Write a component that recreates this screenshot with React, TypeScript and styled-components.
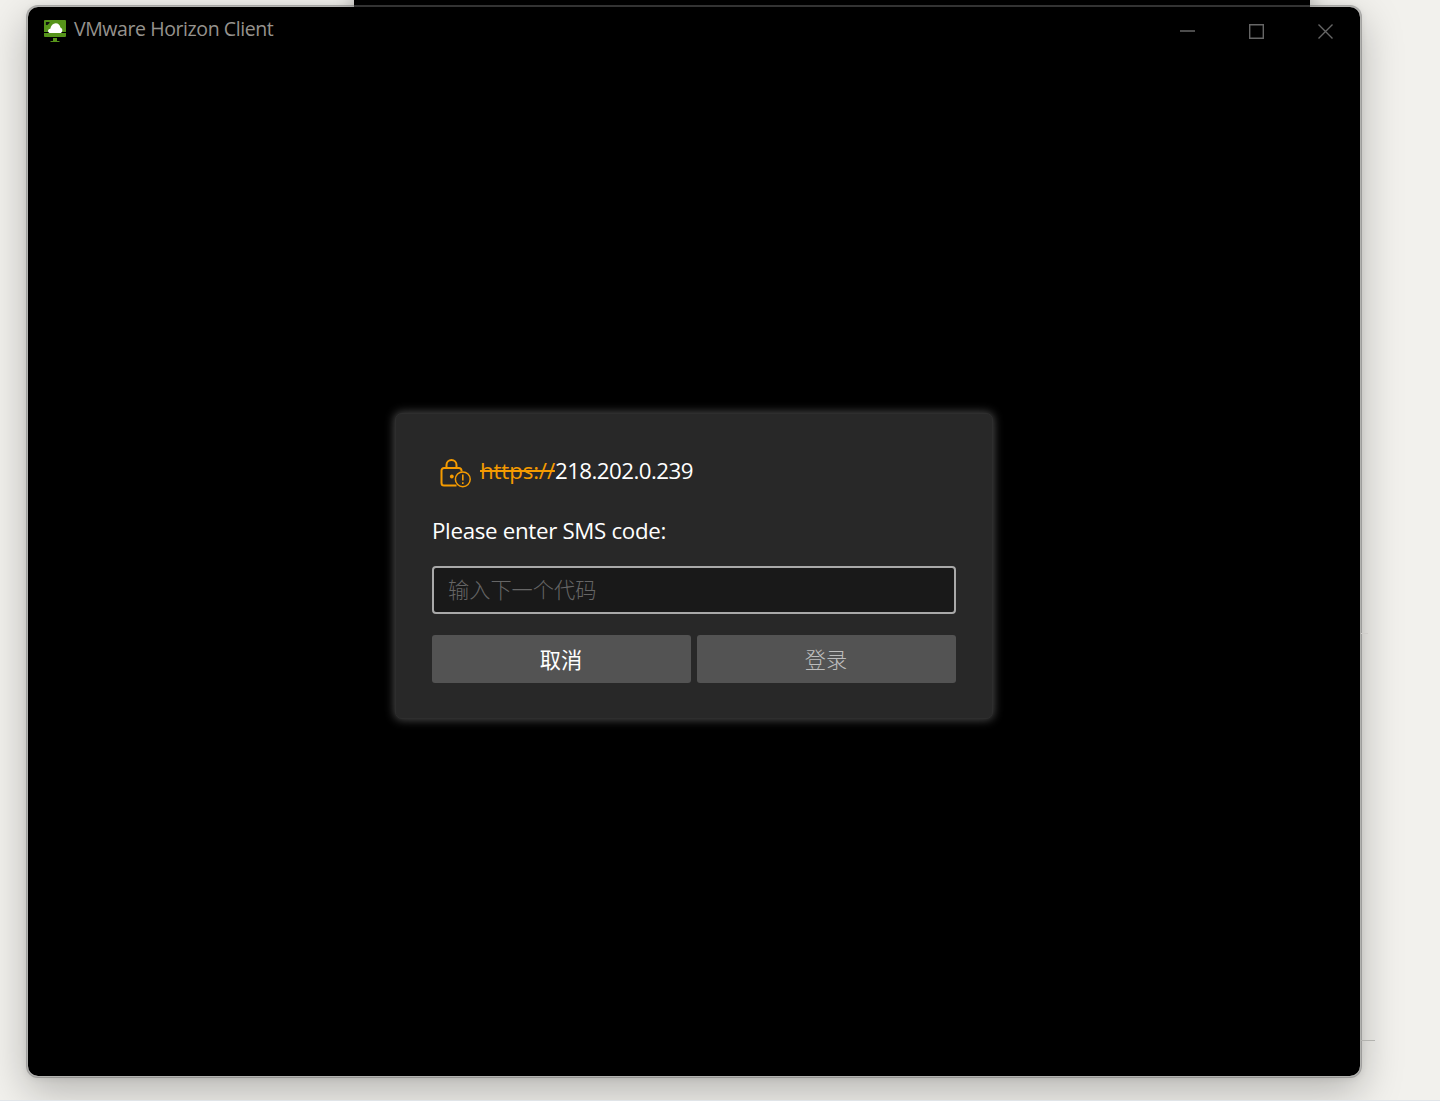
import React from "react";
import styled, { createGlobalStyle } from "styled-components";

const latin = `"Open Sans", "Noto Sans", "Noto Sans CJK SC", sans-serif`;
const han = `"Noto Sans CJK SC", sans-serif`;

const GlobalStyle = createGlobalStyle`
  *, *::before, *::after { box-sizing: border-box; }
  body { margin: 0; background: #f2f1ed; font-family: ${latin}; }
`;

const Desktop = styled.div`
  position: relative;
  width: 1440px;
  height: 1101px;
  overflow: hidden;
  background: #f2f1ed;
  border-bottom: 1px solid #e0e4e8;
`;

const BackWindow = styled.div`
  position: absolute;
  top: -40px;
  left: 354px;
  width: 956px;
  height: 60px;
  background: #000;
  box-shadow: 0 0 20px rgba(0, 0, 0, 0.25);
`;

const Rule = styled.div<{ $top: number; $width: number; $color: string }>`
  position: absolute;
  top: ${(p) => p.$top}px;
  left: 1361px;
  width: ${(p) => p.$width}px;
  height: 1px;
  background: ${(p) => p.$color};
`;

const Window = styled.main`
  position: absolute;
  top: 5px;
  left: 26px;
  width: 1336px;
  height: 1073px;
  display: flex;
  flex-direction: column;
  border: 2px solid rgba(108, 108, 108, 0.47);
  border-radius: 12px;
  background: #000;
  background-clip: padding-box;
  box-shadow: 0 14px 40px rgba(0, 0, 0, 0.25), 0 1px 6px rgba(0, 0, 0, 0.07);
`;

const TitleBar = styled.header`
  display: flex;
  align-items: center;
  height: 48px;
  padding-left: 15px;
`;

const Title = styled.h1`
  flex: 1;
  margin: -4px 0 0 7px;
  font-size: 19.5px;
  font-weight: 400;
  line-height: 28px;
  letter-spacing: -0.41px;
  white-space: nowrap;
  color: #96938e;
`;

const WindowButton = styled.button`
  display: grid;
  place-items: center;
  width: 69px;
  height: 48px;
  padding: 0;
  border: 0;
  background: none;
  color: #666;
`;

const Body = styled.section`
  flex: 1;
  display: flex;
  justify-content: center;
  align-items: flex-start;
  padding-top: 358px;
`;

const Dialog = styled.form`
  display: flex;
  flex-direction: column;
  width: 598px;
  height: 306px;
  padding: 39px 36px 0;
  border: 1px solid #2e2e2e;
  border-radius: 7px;
  background: #282828;
  box-shadow: 0 0 10px 1px #4a4a4a;
`;

const Address = styled.div`
  display: flex;
  align-items: center;
  height: 36px;
  padding-left: 8px;
  font-size: 22.3px;
  line-height: 36px;
  color: #fff;

  svg { margin-top: 4px; }
`;

const Scheme = styled.span`
  margin-left: 9px;
  letter-spacing: -0.14px;
  color: #f59b00;
  text-decoration: line-through;
  text-decoration-thickness: 2px;
`;

const Host = styled.span`
  letter-spacing: -0.55px;
`;

const Prompt = styled.label`
  margin-top: 24px;
  height: 36px;
  font-size: 22.3px;
  line-height: 36px;
  letter-spacing: -0.31px;
  white-space: nowrap;
  color: #fff;
`;

const CodeField = styled.input`
  margin: 17px 0 21px;
  width: 524px;
  height: 48px;
  padding: 0 14px 3px;
  border: 2px solid #a9a9a9;
  border-radius: 4px;
  outline: none;
  background: #191919;
  font: 300 21.2px ${han};
  color: #fff;
  &::placeholder { color: #666; opacity: 1; }
`;

const Actions = styled.div`
  display: grid;
  grid-template-columns: 259px 259px;
  gap: 6px;
`;

const Action = styled.button<{ $muted?: boolean }>`
  height: 48px;
  padding: 0 1px 1px 0;
  border: 0;
  border-radius: 3px;
  background: #535353;
  font: ${(p) => (p.$muted ? 300 : 400)} 21.2px ${han};
  color: ${(p) => (p.$muted ? "#bdbdbd" : "#fff")};
`;

const HorizonLogo = () => (
  <svg width="24" height="24" viewBox="0 0 24 24">
    <path fill="#56941a" d="M2 1h20a1 1 0 0 1 1 1v11H1V2a1 1 0 0 1 1-1zM1 14h22v3a1 1 0 0 1-1 1H2a1 1 0 0 1-1-1zM10 19h4v3h2.500v1h-9v-1H10z" />
    <path fill="none" stroke="#111" strokeWidth="1.200" d="M3.500 6V3.600H6.500M4 5.500l2-2" />
    <path fill="#fff" d="M6.500 14c-2.300-1.300-1.700-4 .8-4.300C8 6.500 10 4.300 12.700 4.300c2.600 0 4.300 1.700 4.700 4.300 2.300 1 2.700 3.800.6 5.400z" />
  </svg>
);

const WarningLock = () => (
  <svg width="31" height="31" viewBox="0 0 31 31" fill="none" stroke="#f59b00" strokeWidth="2">
    <path d="M6.500 10V7a5 5 0 0 1 10 0v3" />
    <path d="M16.500 27.500H4a2.500 2.500 0 0 1-2.500-2.500V12.500A2.500 2.500 0 0 1 4 10h15a2.500 2.500 0 0 1 2.500 2.500v1" />
    <circle cx="11.800" cy="18.500" r="1.900" fill="#f59b00" stroke="none" />
    <circle cx="22.800" cy="21.300" r="7.400" strokeWidth="1.500" />
    <path d="M22.800 16.500v6M22.800 24.200v1.900" strokeWidth="1.600" />
  </svg>
);

export default function App() {
  return (
    <>
      <GlobalStyle />
      <Desktop>
        <BackWindow />
        <Window>
          <TitleBar>
            <HorizonLogo />
            <Title>VMware Horizon Client</Title>
            <WindowButton type="button" aria-label="Minimize">
              <svg width="15" height="15"><path d="M0 7h15" stroke="currentColor" strokeWidth="1.500" /></svg>
            </WindowButton>
            <WindowButton type="button" aria-label="Maximize">
              <svg width="15" height="15"><path d="M.7.7h13.600v13.600H.7z" fill="none" stroke="currentColor" strokeWidth="1.400" /></svg>
            </WindowButton>
            <WindowButton type="button" aria-label="Close">
              <svg width="15" height="15"><path d="M.5.5l14 14M14.500.5l-14 14" stroke="currentColor" strokeWidth="1.400" /></svg>
            </WindowButton>
          </TitleBar>
          <Body>
            <Dialog>
              <Address>
                <WarningLock />
                <Scheme>https://</Scheme>
                <Host>218.202.0.239</Host>
              </Address>
              <Prompt htmlFor="code">Please enter SMS code:</Prompt>
              <CodeField id="code" placeholder="输入下一个代码" />
              <Actions>
                <Action type="button">取消</Action>
                <Action type="button" $muted>登录</Action>
              </Actions>
            </Dialog>
          </Body>
        </Window>
        <Rule $top={633} $width={7} $color="#cfcdca" />
        <Rule $top={1040} $width={14} $color="#b3b3af" />
      </Desktop>
    </>
  );
}
